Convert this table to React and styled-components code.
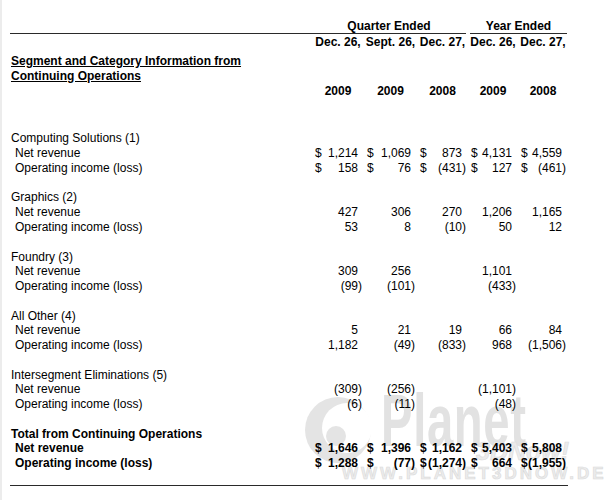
import React from "react";
import styled, { createGlobalStyle } from "styled-components";

const GlobalStyle = createGlobalStyle`
  html, body {
    margin: 0;
    padding: 0;
    background: #fff;
  }
  body {
    font-family: "Liberation Sans", Arial, sans-serif;
    font-size: 12px;
    color: #000;
  }
`;

const Page = styled.div`
  position: relative;
  width: 606px;
  height: 500px;
  box-sizing: border-box;
  border-left: 2px solid #ececec;
  overflow: hidden;
  background: #fff;
`;

const Sheet = styled.table`
  position: relative;
  z-index: 1;
  margin-left: 8px;
  border-collapse: collapse;
  table-layout: fixed;
  width: 558px;
`;

const Cell = styled.td`
  padding: 0;
  height: ${(p) => p.$h || 14.77}px;
  vertical-align: ${(p) => p.$align || "middle"};
  line-height: 14px;
  white-space: nowrap;
  overflow: visible;
`;

const HeadRule = styled.div`
  height: 13px;
  line-height: 13px;
  border-bottom: 1px solid #2a2a2a;
  margin: ${(p) => p.$margin || "0"};
  font-weight: bold;
  text-align: center;
`;

const HeadText = styled.div`
  font-weight: bold;
  text-align: center;
  white-space: nowrap;
  margin: 0 -6px;
`;

const SectionTitle = styled.span`
  display: inline-block;
  padding-left: 1px;
  font-weight: bold;
  text-decoration: underline;
  text-underline-offset: 1px;
`;

const Label = styled.div`
  padding-left: ${(p) => (p.$indent ? 5 : 1)}px;
  font-weight: ${(p) => (p.$bold ? "bold" : "normal")};
`;

const Amount = styled.div`
  display: flex;
  padding: 0 2px 0 3px;
  font-weight: ${(p) => (p.$bold ? "bold" : "normal")};
`;

const Dollar = styled.span`
  flex: none;
`;

const Figure = styled.span`
  margin-left: auto;
  padding-right: ${(p) => (p.$neg ? 0 : 4)}px;
`;

const BottomRule = styled.div`
  height: 14px;
  border-bottom: 1px solid #2a2a2a;
`;

/* faint site watermark lying over the lower right of the table */
const Watermark = styled.div`
  position: absolute;
  z-index: 0;
  left: 0;
  top: 0;
  width: 606px;
  height: 500px;
  pointer-events: none;
  font-family: "Liberation Sans", Arial, sans-serif;
  font-weight: bold;
`;

const Ring = styled.svg`
  position: absolute;
  left: 301px;
  top: 396px;
`;

const PlanetWord = styled.div`
  position: absolute;
  left: 379px;
  top: 383px;
  font-size: 75px;
  line-height: 75px;
  color: #e2e2e2;
  transform: scaleX(0.63);
  transform-origin: left top;
  letter-spacing: 1px;
`;

const NowWord = styled.div`
  position: absolute;
  left: 474px;
  top: 439px;
  font-size: 25px;
  line-height: 25px;
  font-style: italic;
  color: #ebebeb;
  -webkit-text-stroke: 0.6px #dcdcdc;
`;

const SiteUrl = styled.div`
  position: absolute;
  left: 340px;
  top: 465px;
  font-size: 17px;
  line-height: 17px;
  letter-spacing: 3px;
  color: #ececec;
  -webkit-text-stroke: 0.6px #dadada;
`;

const sections = [
  {
    title: "Computing Solutions (1)",
    dollar: true,
    net: ["1,214", "1,069", "873", "4,131", "4,559"],
    op: ["158", "76", "(431)", "127", "(461)"],
  },
  {
    title: "Graphics (2)",
    net: ["427", "306", "270", "1,206", "1,165"],
    op: ["53", "8", "(10)", "50", "12"],
  },
  {
    title: "Foundry (3)",
    net: ["309", "256", "", "1,101", ""],
    op: ["(99)", "(101)", "", "(433)", ""],
  },
  {
    title: "All Other (4)",
    net: ["5", "21", "19", "66", "84"],
    op: ["1,182", "(49)", "(833)", "968", "(1,506)"],
  },
  {
    title: "Intersegment Eliminations (5)",
    net: ["(309)", "(256)", "", "(1,101)", ""],
    op: ["(6)", "(11)", "", "(48)", ""],
  },
  {
    title: "Total from Continuing Operations",
    dollar: true,
    bold: true,
    net: ["1,646", "1,396", "1,162", "5,403", "5,808"],
    op: ["1,288", "(77)", "(1,274)", "664", "(1,955)"],
  },
];

const dates = ["Dec. 26,", "Sept. 26,", "Dec. 27,", "Dec. 26,", "Dec. 27,"];
const years = ["2009", "2009", "2008", "2009", "2008"];

const DataRow = ({ label, values, dollar, bold }) => (
  <tr>
    <Cell>
      <Label $indent $bold={bold}>
        {label}
      </Label>
    </Cell>
    {values.map((v, i) => (
      <Cell key={i}>
        <Amount $bold={bold}>
          {dollar && v && <Dollar>$</Dollar>}
          <Figure $neg={v.startsWith("(")}>{v}</Figure>
        </Amount>
      </Cell>
    ))}
  </tr>
);

const Section = ({ section, last }) => (
  <>
    <tr>
      <Cell colSpan={6}>
        <Label $bold={section.bold}>{section.title}</Label>
      </Cell>
    </tr>
    <DataRow
      label="Net revenue"
      values={section.net}
      dollar={section.dollar}
      bold={section.bold}
    />
    <DataRow
      label="Operating income (loss)"
      values={section.op}
      dollar={section.dollar}
      bold={section.bold}
    />
    {!last && (
      <tr>
        <Cell colSpan={6} />
      </tr>
    )}
  </>
);

const App = () => (
  <Page>
    <GlobalStyle />
    <Watermark>
      <Ring width="72" height="68" viewBox="0 0 72 68">
        <circle cx="35" cy="34" r="33" fill="#e4e4e4" />
        <circle cx="44" cy="32" r="25" fill="#fff" />
        <circle cx="33" cy="40" r="10" fill="#e4e4e4" />
      </Ring>
      <PlanetWord>Planet</PlanetWord>
      <NowWord>3DNow!</NowWord>
      <SiteUrl>WWW.PLANET3DNOW.DE</SiteUrl>
    </Watermark>
    <Sheet>
      <colgroup>
        <col style={{ width: 302 }} />
        <col style={{ width: 52 }} />
        <col style={{ width: 53 }} />
        <col style={{ width: 51 }} />
        <col style={{ width: 50 }} />
        <col style={{ width: 50 }} />
      </colgroup>
      <tbody>
        <tr>
          <Cell $h={34} $align="bottom">
            <HeadRule />
          </Cell>
          <Cell $h={34} $align="bottom" colSpan={3}>
            <HeadRule $margin="0 2px 0 0">Quarter Ended</HeadRule>
          </Cell>
          <Cell $h={34} $align="bottom" colSpan={2}>
            <HeadRule $margin="0 1px 0 2px">Year Ended</HeadRule>
          </Cell>
        </tr>
        <tr>
          <Cell $h={16} />
          {dates.map((d, i) => (
            <Cell key={i} $h={16}>
              <HeadText>{d}</HeadText>
            </Cell>
          ))}
        </tr>
        <tr>
          <Cell $h={18} $align="bottom" colSpan={6}>
            <SectionTitle>Segment and Category Information from</SectionTitle>
          </Cell>
        </tr>
        <tr>
          <Cell $h={15} colSpan={6}>
            <SectionTitle>Continuing Operations</SectionTitle>
          </Cell>
        </tr>
        <tr>
          <Cell $h={15} />
          {years.map((y, i) => (
            <Cell key={i} $h={15}>
              <HeadText>{y}</HeadText>
            </Cell>
          ))}
        </tr>
        <tr>
          <Cell $h={33} colSpan={6} />
        </tr>
        {sections.map((s, i) => (
          <Section key={s.title} section={s} last={i === sections.length - 1} />
        ))}
        <tr>
          <Cell $h={15} colSpan={6} $align="top">
            <BottomRule />
          </Cell>
        </tr>
      </tbody>
    </Sheet>
  </Page>
);

export default App;
